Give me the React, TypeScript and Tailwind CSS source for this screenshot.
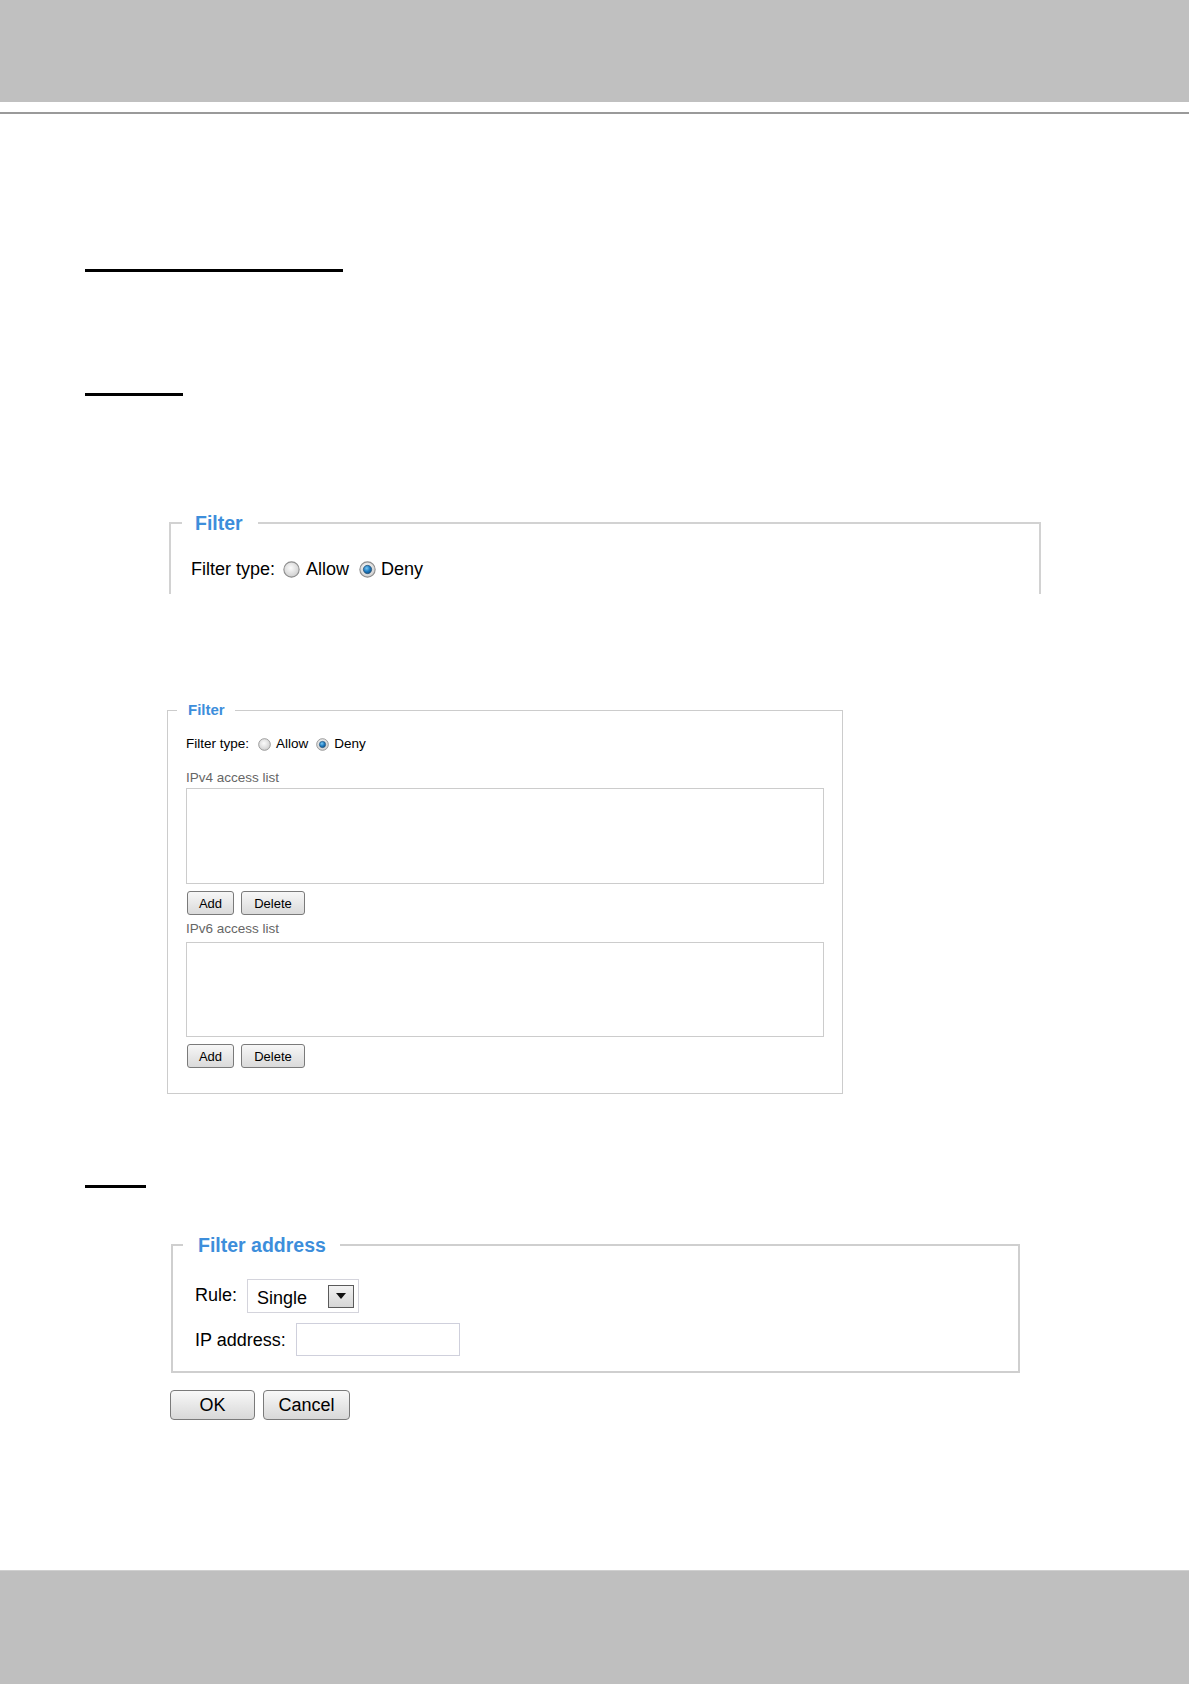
import React from "react";

function Radio({ checked, size, id }: { checked?: boolean; size: number; id: string }) {
  return (
    <svg width={size} height={size} viewBox="0 0 14 14" className="shrink-0">
      <defs>
        <radialGradient id={`rg-${id}`} cx="45%" cy="40%" r="65%">
          <stop offset="0%" stopColor="#fbfbfb" />
          <stop offset="100%" stopColor="#cbcbcb" />
        </radialGradient>
        <radialGradient id={`rb-${id}`} cx="40%" cy="35%" r="70%">
          <stop offset="0%" stopColor="#7cc8f2" />
          <stop offset="55%" stopColor="#1e7cc2" />
          <stop offset="100%" stopColor="#0d4f85" />
        </radialGradient>
      </defs>
      <circle cx="7" cy="7" r="6.3" fill={`url(#rg-${id})`} stroke="#8e8e8e" strokeWidth="0.9" />
      {checked && <circle cx="7" cy="7" r="3.4" fill={`url(#rb-${id})`} stroke="#2a4f70" strokeWidth="0.6" />}
    </svg>
  );
}

function SmallButton({ label, w }: { label: string; w: string }) {
  return (
    <button
      className={`${w} h-[24px] border border-[#7a7a7a] rounded-[3px] bg-linear-to-b from-[#f7f7f7] to-[#dadada] text-[13px] text-black leading-none flex items-center justify-center`}
    >
      {label}
    </button>
  );
}

function BigButton({ label, w }: { label: string; w: string }) {
  return (
    <button
      className={`${w} h-[30px] border border-[#7a7a7a] rounded-[4px] bg-linear-to-b from-[#f8f8f8] to-[#d8d8d8] text-[18px] text-black leading-none flex items-center justify-center`}
    >
      {label}
    </button>
  );
}

export default function App() {
  return (
    <div className="w-[1191px] h-[1684px] bg-white flex flex-col font-['Liberation_Sans',Arial,sans-serif] text-black overflow-hidden">
      {/* header */}
      <div className="h-[102px] w-[1189px] bg-[#c0c0c0] shrink-0" />
      <div className="mt-[10px] h-[2px] w-[1189px] bg-[#9a9a9a] shrink-0" />

      {/* section underlines */}
      <div className="mt-[155px] ml-[85px] w-[258px] h-[3px] bg-black shrink-0" />
      <div className="mt-[121px] ml-[85px] w-[98px] h-[3px] bg-black shrink-0" />

      {/* Filter box (large, cropped) */}
      <fieldset className="mt-[115px] ml-[169px] w-[872px] h-[83px] border-2 border-b-0 border-[#d2d2d2] shrink-0">
        <legend className="ml-[11px] pl-[13px] pr-[15px] text-[19.5px] leading-[24px] font-bold text-[#3d8edb]">
          Filter
        </legend>
        <div className="pl-[20px] pt-[23px] flex items-center text-[18px] leading-[22px]">
          <span>Filter type:</span>
          <span className="ml-[8px]">
            <Radio size={17} id="a1" />
          </span>
          <span className="ml-[6px]">Allow</span>
          <span className="ml-[10px]">
            <Radio size={17} id="a2" checked />
          </span>
          <span className="ml-[5px]">Deny</span>
        </div>
      </fieldset>

      {/* Filter box with access lists */}
      <fieldset className="mt-[107px] ml-[167px] w-[676px] border border-[#cccccc] shrink-0">
        <legend className="ml-[9px] pl-[11px] pr-[10px] text-[15px] leading-[18px] font-bold text-[#3d8edb]">
          Filter
        </legend>
        <div className="pl-[18px] pr-[17px] pb-[25px] flex flex-col">
          <div className="mt-[17px] flex items-center text-[13.5px] leading-[16px]">
            <span>Filter type:</span>
            <span className="ml-[9px]">
              <Radio size={13} id="b1" />
            </span>
            <span className="ml-[5px]">Allow</span>
            <span className="ml-[8px]">
              <Radio size={13} id="b2" checked />
            </span>
            <span className="ml-[5px]">Deny</span>
          </div>
          <div className="mt-[18px] text-[13.5px] leading-[16px] text-[#666666]">IPv4 access list</div>
          <div className="mt-[2px] w-[638px] h-[96px] border border-[#cccccc] bg-white" />
          <div className="mt-[7px] flex gap-[7px] pl-[1px]">
            <SmallButton label="Add" w="w-[47px]" />
            <SmallButton label="Delete" w="w-[64px]" />
          </div>
          <div className="mt-[6px] text-[13.5px] leading-[16px] text-[#666666]">IPv6 access list</div>
          <div className="mt-[5px] w-[638px] h-[95px] border border-[#cccccc] bg-white" />
          <div className="mt-[7px] flex gap-[7px] pl-[1px]">
            <SmallButton label="Add" w="w-[47px]" />
            <SmallButton label="Delete" w="w-[64px]" />
          </div>
        </div>
      </fieldset>

      {/* section underline */}
      <div className="mt-[91px] ml-[85px] w-[61px] h-[3px] bg-black shrink-0" />

      {/* Filter address */}
      <fieldset className="mt-[45px] ml-[171px] w-[849px] border-2 border-[#cfcfcf] shrink-0">
        <legend className="ml-[10px] pl-[15px] pr-[14px] text-[19.5px] leading-[24px] font-bold text-[#3d8edb]">
          Filter address
        </legend>
        <div className="pl-[22px] pb-[15px] flex flex-col text-[18px]">
          <div className="mt-[22px] flex items-center">
            <span className="leading-[22px] -mt-[3px]">Rule:</span>
            <div className="ml-[10px] w-[112px] h-[34px] border border-[#d4d4dc] flex items-center justify-between pl-[9px] pr-[4px]">
              <span className="text-[18px] leading-[22px] mt-[4px]">Single</span>
              <span className="w-[26px] h-[23px] border border-[#5a5a5a] bg-linear-to-b from-[#f2f2f2] to-[#d6d6d6] flex items-center justify-center">
                <svg width="10" height="6" viewBox="0 0 10 6">
                  <path d="M0 0 H10 L5 6 Z" fill="#111" />
                </svg>
              </span>
            </div>
          </div>
          <div className="mt-[10px] flex items-center">
            <span className="leading-[22px]">IP address:</span>
            <div className="ml-[10px] w-[164px] h-[33px] border border-[#cfd0dc] bg-white" />
          </div>
        </div>
      </fieldset>

      <div className="mt-[17px] ml-[170px] flex gap-[8px] shrink-0">
        <BigButton label="OK" w="w-[85px]" />
        <BigButton label="Cancel" w="w-[87px]" />
      </div>

      {/* footer */}
      <div className="mt-auto h-[114px] w-[1189px] bg-[#bfbfbf] border-t border-[#d0d0d0] shrink-0" />
    </div>
  );
}
